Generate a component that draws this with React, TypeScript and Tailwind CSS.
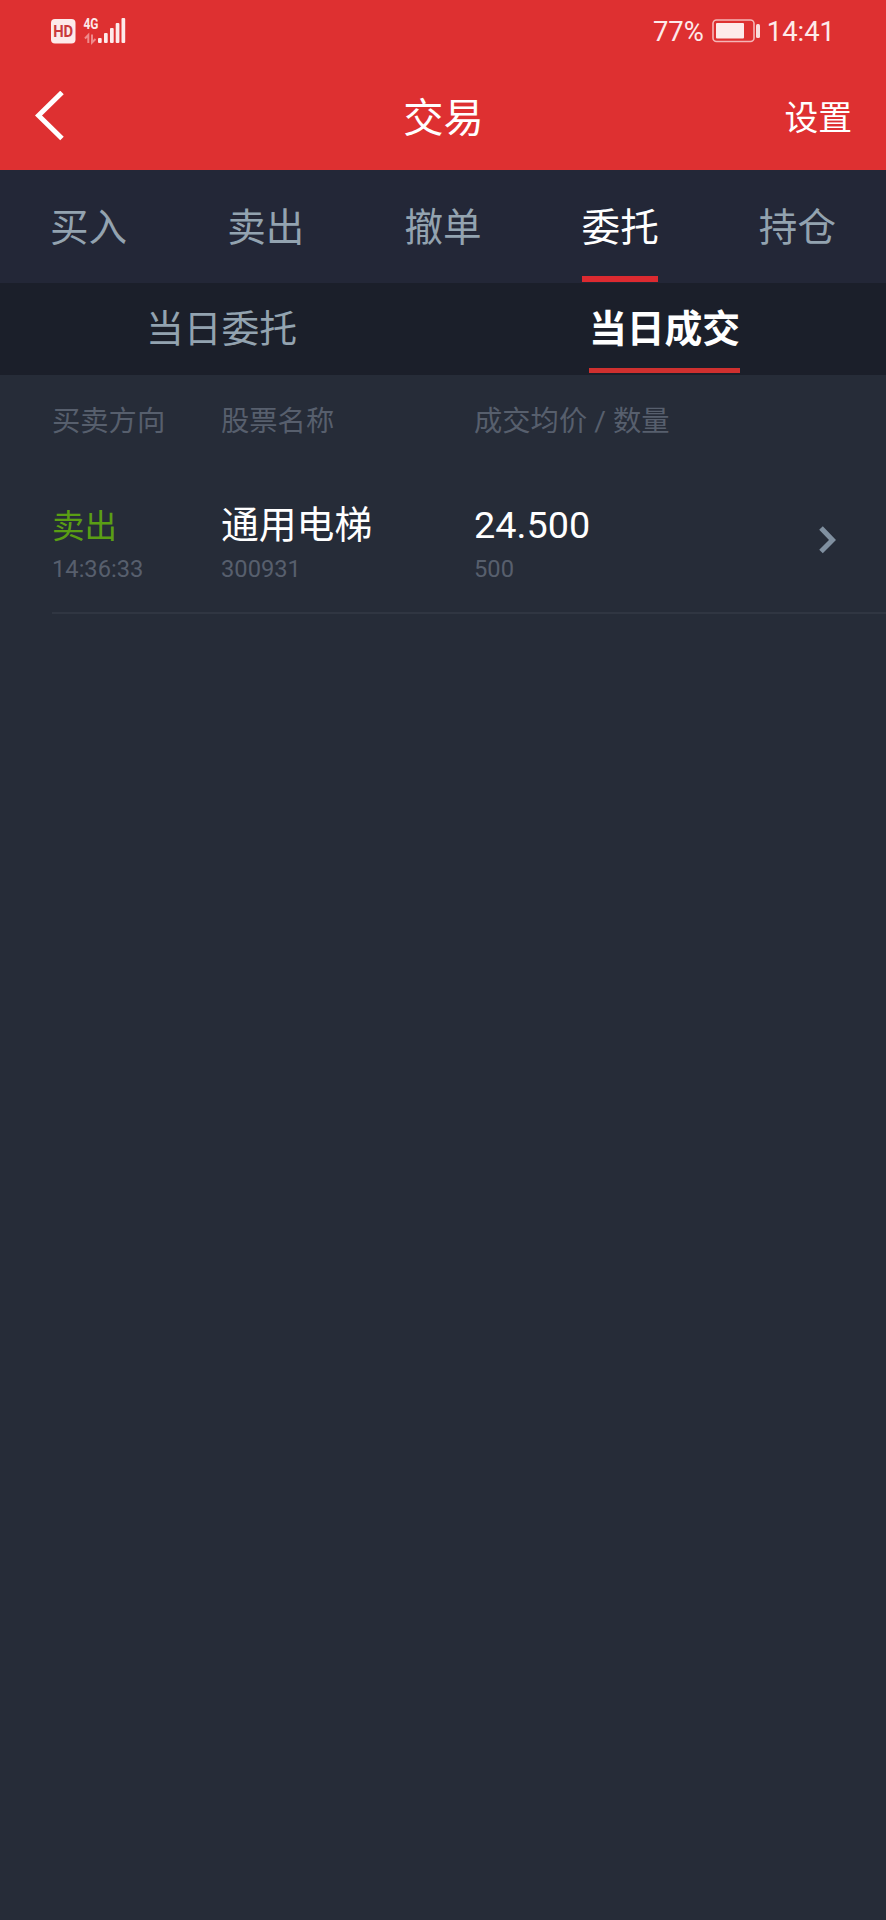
const tabs = ['买入', '卖出', '撤单', '委托', '持仓'];

const trades = [
  { side: '卖出', time: '14:36:33', name: '通用电梯', code: '300931', price: '24.500', amount: '500' },
];

function StatusBar() {
  return (
    <div className="flex h-[62px] items-center justify-between pl-[50px] pr-[51px] text-[#fdeaea]">
      <svg width="76" height="62" viewBox="0 0 76 62" aria-label="HD 4G">
        <rect x="1" y="19" width="24.500" height="24.500" rx="4" fill="#fdeaea" />
        <text x="13.200" y="37" textAnchor="middle" textLength="20" lengthAdjust="spacingAndGlyphs" className="fill-[#c9393c] font-['Roboto',sans-serif] text-[16px] font-bold">HD</text>
        <text x="33.500" y="28.700" textLength="15" lengthAdjust="spacingAndGlyphs" className="fill-[#fdeaea] font-['Roboto',sans-serif] text-[15.500px] font-bold">4G</text>
        <g fill="none" stroke="#ef8a8b" strokeWidth="2">
          <path d="M38.300 43V35l-3.300 3.500M42 34.500v8l3.500-3.500" />
        </g>
        <g fill="#fdeaea">
          <rect x="48" y="38" width="3.700" height="5" rx="1" />
          <rect x="54" y="33" width="3.700" height="10" rx="1" />
          <rect x="60" y="28" width="3.700" height="15" rx="1" />
          <rect x="65.700" y="23" width="3.700" height="20" rx="1" />
          <rect x="71.500" y="18" width="3.700" height="25" rx="1" />
        </g>
      </svg>
      <div className="flex items-center font-['Roboto',sans-serif] text-[27.400px] leading-[62px]">
        <span className="pt-px">77%</span>
        <svg className="ml-2 mr-[7px]" width="48" height="62" viewBox="0 0 48 62">
          <rect x="1" y="20" width="41" height="21.500" rx="3.500" fill="none" stroke="#f5b5b6" strokeWidth="1.600" />
          <rect x="4" y="23" width="28" height="15.500" rx="1" fill="#fdeaea" />
          <rect x="44" y="24" width="4" height="14" rx="1.500" fill="#fbdcdc" />
        </svg>
        <span className="pt-px">14:41</span>
      </div>
    </div>
  );
}

function TitleBar() {
  return (
    <div className="grid h-[108px] grid-cols-[1fr_auto_1fr] items-center pl-[35px] pr-[34px] text-white">
      <button aria-label="返回" className="justify-self-start">
        <svg width="30" height="50" viewBox="0 0 30 50" fill="none" stroke="white" strokeWidth="5">
          <path d="M27 1.500L3.500 24.500L27 47.500" />
        </svg>
      </button>
      <h1 className="h-[106px] text-[40.300px] leading-[104px]">交易</h1>
      <button className="h-[106px] justify-self-end text-[33.800px] leading-[104px]">设置</button>
    </div>
  );
}

export default function App() {
  return (
    <div className="flex min-h-[1920px] w-[886px] flex-col bg-[#262c38] font-['Noto_Sans_CJK_SC',sans-serif]">
      <header className="bg-[#de3031]">
        <StatusBar />
        <TitleBar />
      </header>

      <nav className="grid h-[113px] grid-cols-5 bg-[#232737] text-[38.600px] text-[#93a3b0]">
        {tabs.map((tab) => (
          <div key={tab} className="flex flex-col items-center">
            <span className={tab === '委托' ? 'h-[106px] leading-[108px] text-white' : 'h-[106px] leading-[108px]'}>{tab}</span>
            {tab === '委托' && <span className="h-1.5 w-[76px] bg-[#dc2a30]" />}
          </div>
        ))}
      </nav>

      <nav className="grid h-[92px] grid-cols-2 bg-[#1b1f2a] text-[37.800px] text-[#93a3b0]">
        <div className="flex flex-col items-center">
          <span className="h-[85px] leading-[86px]">当日委托</span>
        </div>
        <div className="flex flex-col items-center">
          <span className="h-[85px] font-bold leading-[86px] text-white">当日成交</span>
          <span className="h-[5px] w-[151px] bg-[#cf302f]" />
        </div>
      </nav>

      <div className="grid h-[90px] grid-cols-[169px_253px_1fr] pl-[52px] font-['Roboto','Noto_Sans_CJK_SC',sans-serif] text-[28.300px] leading-[94px] text-[#575f6d]">
        <span>买卖方向</span>
        <span>股票名称</span>
        <span>成交均价 / 数量</span>
      </div>

      {trades.map((t) => (
        <div key={t.time} className="ml-[52px] grid h-[149px] grid-cols-[169px_253px_1fr_auto] border-b-2 border-[#303642] pr-[49px] pt-[31px] text-white">
          <div>
            <div className="h-[57px] text-[32.500px] leading-[55px] text-[#5a9e14]">{t.side}</div>
            <div className="font-['Roboto',sans-serif] text-[23.700px] leading-8 text-[#575f6d]">{t.time}</div>
          </div>
          <div>
            <div className="h-[57px] text-[37.800px] leading-[52px]">{t.name}</div>
            <div className="font-['Roboto',sans-serif] text-[23.700px] leading-8 text-[#575f6d]">{t.code}</div>
          </div>
          <div>
            <div className="h-[57px] font-['Roboto',sans-serif] text-[37.800px] leading-[58px]">{t.price}</div>
            <div className="font-['Roboto',sans-serif] text-[23.700px] leading-8 text-[#575f6d]">{t.amount}</div>
          </div>
          <svg className="mt-[29px]" width="19" height="30" viewBox="0 0 19 30" fill="none" stroke="#8090a0" strokeWidth="5">
            <path d="M3 3L14.500 15L3 26.500" />
          </svg>
        </div>
      ))}
    </div>
  );
}
